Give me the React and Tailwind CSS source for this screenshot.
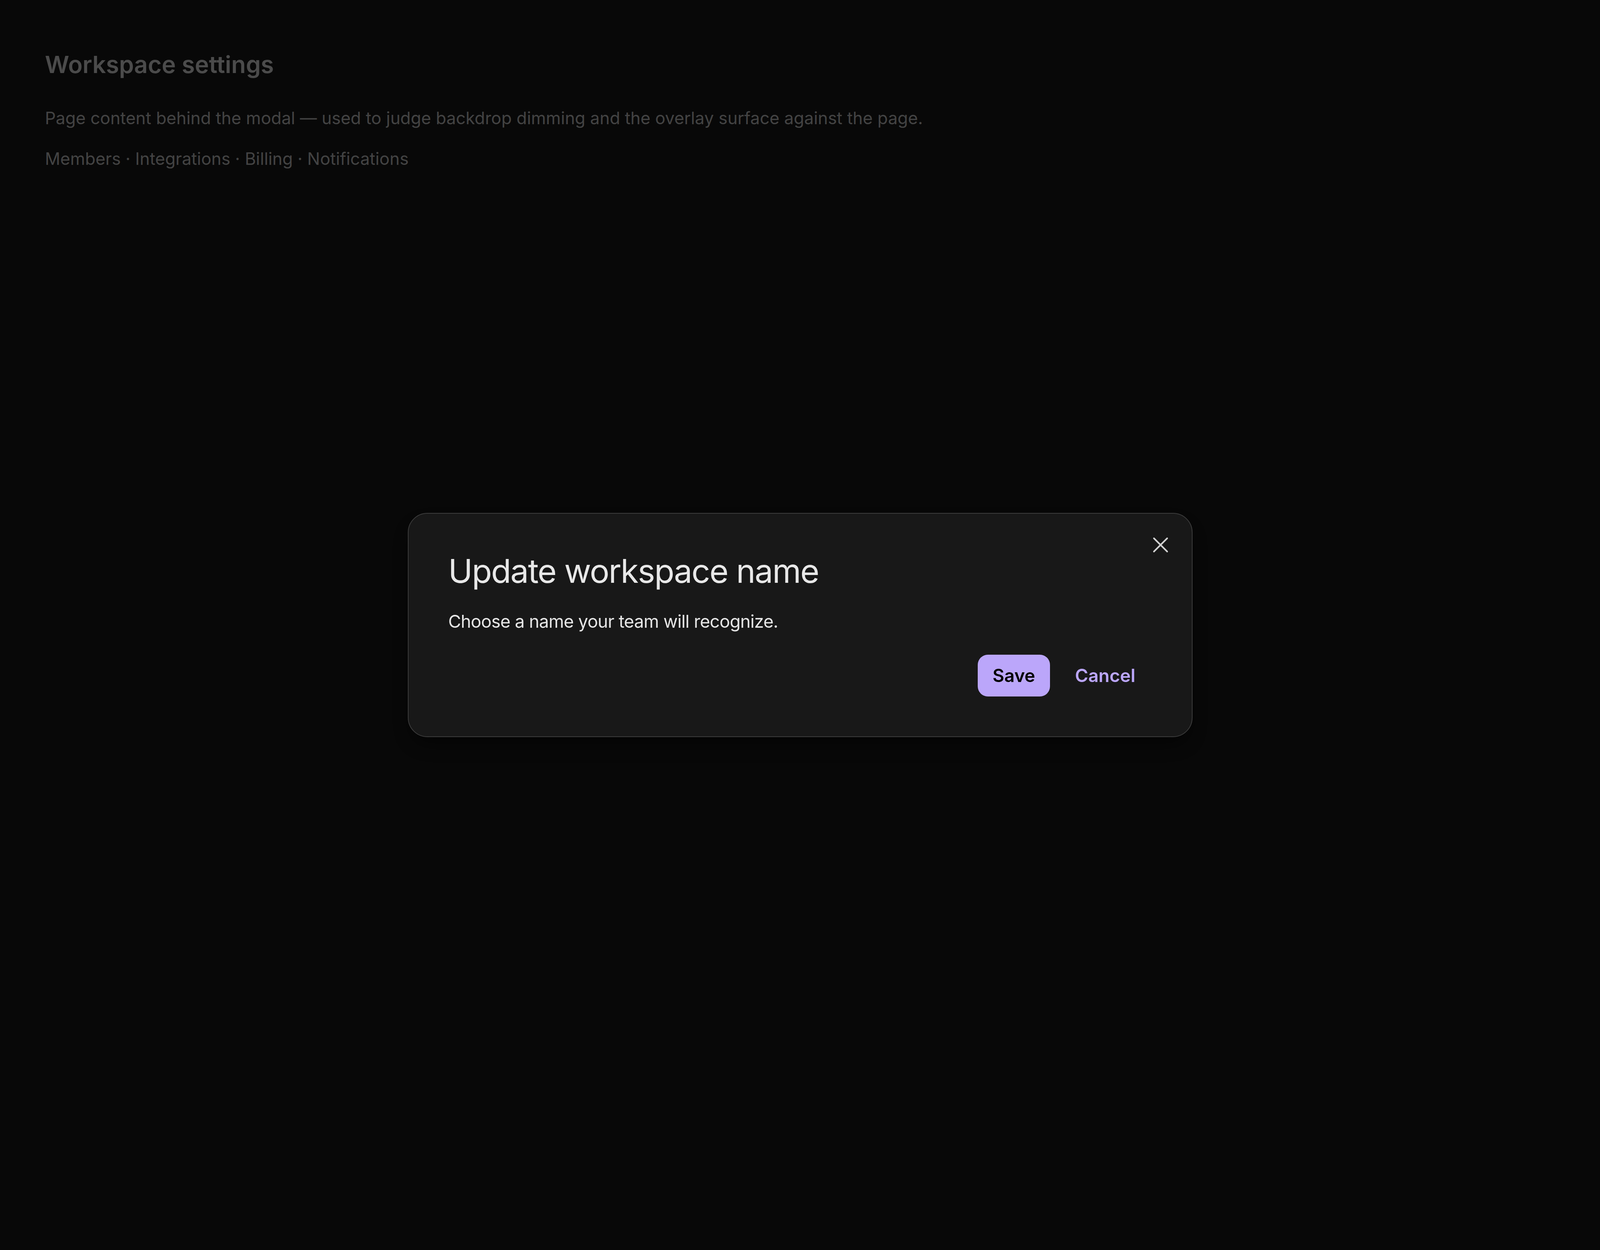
import { X } from "lucide-react";

export default function App() {
  return (
    <div className="min-h-screen bg-[#101010] font-['Inter',sans-serif]">
      <div className="px-[115px] pt-[127px]">
        <h1 className="text-[61px] font-semibold text-[#969696] leading-tight">Workspace settings</h1>
        <p className="mt-[67px] text-[43.5px] text-[#868686]">
          Page content behind the modal — used to judge backdrop dimming and the overlay surface against the page.
        </p>
        <p className="mt-[38px] text-[43.5px] text-[#868686]">Members · Integrations · Billing · Notifications</p>
      </div>

      <div className="fixed inset-0 bg-black/50 flex items-center justify-center">
        <div className="relative w-[2009px] rounded-[50px] border-2 border-[#3b3b3b] bg-[#181818] p-[102px] shadow-2xl shadow-black/60">
          <button className="absolute top-[46px] right-[46px] text-[#d2d2d2]">
            <X size={68} strokeWidth={1.4} />
          </button>
          <h2 className="text-[84px] leading-[90px] tracking-[-0.025em] text-[#e8e8e8]">Update workspace name</h2>
          <p className="mt-[50px] text-[45px] tracking-[-0.018em] text-[#e6e6e6]">Choose a name your team will recognize.</p>
          <div className="mt-[52px] flex justify-end items-center gap-[22px]">
            <button className="rounded-[26px] bg-[#bba6fa] px-[38px] py-[20px] text-[46px] leading-[67px] font-semibold text-black">
              Save
            </button>
            <button className="px-[42px] py-[20px] text-[46px] leading-[67px] font-semibold text-[#bba6fa]">Cancel</button>
          </div>
        </div>
      </div>
    </div>
  );
}
